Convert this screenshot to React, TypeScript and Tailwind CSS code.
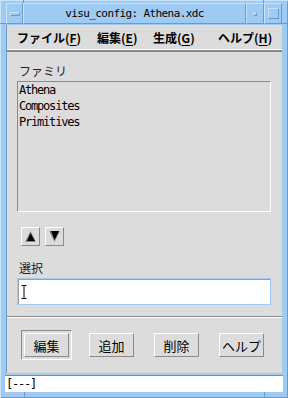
const jp = "font-['Noto_Sans_CJK_JP','Noto_Sans',sans-serif]";
const mono = "font-['DejaVu_Sans_Mono','Liberation_Mono',monospace]";

function Mnemonic({ label, k }: { label: string; k: string }) {
  return (
    <span>
      {label}(<span className="underline underline-offset-2">{k}</span>)
    </span>
  );
}

function PushButton({ children }: { children: React.ReactNode }) {
  return (
    <button className="flex h-[24px] w-[45px] items-center justify-center border border-t-white border-l-white border-r-[#8a8a8a] border-b-[#8a8a8a] bg-[#dcdcdc] text-[13px] leading-none text-black">
      {children}
    </button>
  );
}

function ArrowButton({ dir }: { dir: "up" | "down" }) {
  return (
    <button className="flex h-[19px] w-[19px] items-center justify-center border border-t-white border-l-white border-r-[#8a8a8a] border-b-[#8a8a8a] bg-[#dcdcdc]">
      <svg width="13" height="13" viewBox="0 0 13 13">
        {dir === "up" ? (
          <>
            <polygon points="6.5,1 1,12 12,12" fill="#8a8a8a" />
            <polygon points="6.5,3 3,11 11,11" fill="#000" />
          </>
        ) : (
          <>
            <polygon points="1,1 12,1 6.5,12" fill="#8a8a8a" />
            <polygon points="3,1 11,1 6.5,10" fill="#000" />
          </>
        )}
      </svg>
    </button>
  );
}

export default function App() {
  return (
    <div className="relative flex h-[398px] w-[288px] flex-col bg-[#9fcaf2] px-[6px] pb-[6px] pt-[3px] shadow-[inset_1px_1px_0_#c9e3fb,inset_-1px_-1px_0_#6a9acb]">
      {/* frame resize ticks */}
      <div className="absolute left-[23px] top-0 h-[3px] w-px bg-[#6a9acb]" />
      <div className="absolute right-[24px] top-0 h-[3px] w-px bg-[#6a9acb]" />
      <div className="absolute left-0 top-[23px] h-px w-[6px] bg-[#6a9acb]" />
      <div className="absolute right-0 top-[23px] h-px w-[6px] bg-[#6a9acb]" />
      <div className="absolute bottom-0 left-[24px] h-[6px] w-px bg-[#6a9acb]" />
      <div className="absolute bottom-0 right-[23px] h-[6px] w-px bg-[#6a9acb]" />

      {/* title bar */}
      <div className="flex h-[21px] shrink-0">
        <div className="flex w-[17px] items-center justify-center border border-t-[#c9e3fb] border-l-[#c9e3fb] border-r-[#6a9acb] border-b-[#6a9acb]">
          <div className="h-[4px] w-[10px] border border-t-[#c9e3fb] border-l-[#c9e3fb] border-r-[#6a9acb] border-b-[#6a9acb]" />
        </div>
        <div
          className={`flex flex-1 items-center justify-center border border-t-[#c9e3fb] border-l-[#c9e3fb] border-r-[#6a9acb] border-b-[#6a9acb] text-[11px] leading-none tracking-[-0.6px] text-black ${mono}`}
        >
          visu_config: Athena.xdc
        </div>
        <div className="flex w-[18px] items-center justify-center border border-t-[#c9e3fb] border-l-[#c9e3fb] border-r-[#6a9acb] border-b-[#6a9acb]">
          <div className="h-[4px] w-[4px] border border-t-[#c9e3fb] border-l-[#c9e3fb] border-r-[#6a9acb] border-b-[#6a9acb]" />
        </div>
        <div className="flex w-[18px] items-center justify-center border border-t-[#c9e3fb] border-l-[#c9e3fb] border-r-[#6a9acb] border-b-[#6a9acb]">
          <div className="h-[11px] w-[11px] border border-t-[#c9e3fb] border-l-[#c9e3fb] border-r-[#6a9acb] border-b-[#6a9acb]" />
        </div>
      </div>

      {/* main window */}
      <div className={`mt-px flex flex-1 flex-col bg-[#dcdcdc] text-black ${jp} border-l border-[#6a9acb]`}>
        <div className="flex h-[27px] shrink-0 items-center border-b-2 border-b-[#8a8a8a] pl-[10px] text-[12px] font-bold leading-none shadow-[inset_0_-1px_0_#fff]">
          <div className="w-[80px]">
            <Mnemonic label="ファイル" k="F" />
          </div>
          <div className="w-[56px]">
            <Mnemonic label="編集" k="E" />
          </div>
          <div className="w-[65px]">
            <Mnemonic label="生成" k="G" />
          </div>
          <div>
            <Mnemonic label="ヘルプ" k="H" />
          </div>
        </div>

        <div className="flex flex-col pl-[10px] pr-[9px]">
          <div className="ml-[2px] mt-[12px] h-[14px] text-[12px] leading-[14px] text-[#222]">ファミリ</div>
          <div
            className={`mt-[3px] h-[131px] w-[254px] border border-t-[#8a8a8a] border-l-[#8a8a8a] border-r-white border-b-white pl-px text-[12px] leading-[16px] tracking-[-1.2px] ${mono}`}
          >
            <div>Athena</div>
            <div>Composites</div>
            <div>Primitives</div>
          </div>

          <div className="ml-[4px] mt-[15px] flex gap-[5px]">
            <ArrowButton dir="up" />
            <ArrowButton dir="down" />
          </div>

          <div className="ml-[2px] mt-[15px] h-[14px] text-[12px] leading-[14px] text-[#222]">選択</div>
          <div className="mt-[3px] flex h-[27px] w-[254px] items-center border border-[#9fcaf2] bg-white pl-[3px] shadow-[inset_1px_1px_0_#a0a0a0]">
            <svg width="6" height="14" viewBox="0 0 6 14">
              <path d="M0.5 0.5H5.5M3 0.5V13.5M0.5 13.5H5.5" stroke="#000" strokeWidth="1" fill="none" />
            </svg>
          </div>
        </div>

        <div className="mt-[11px] h-[2px] border-t border-t-[#8a8a8a] border-b border-b-white" />

        <div className="mt-[15px] flex justify-between pl-[17px] pr-[18px]">
          <div className="-m-[3px] border border-t-[#8a8a8a] border-l-[#8a8a8a] border-r-white border-b-white p-[2px]">
            <PushButton>編集</PushButton>
          </div>
          <PushButton>追加</PushButton>
          <PushButton>削除</PushButton>
          <PushButton>ヘルプ</PushButton>
        </div>
      </div>

      {/* status line */}
      <div
        className={`-mx-px mt-[2px] flex h-[17px] shrink-0 items-center border-t border-[#8a8a8a] bg-white pl-[1px] text-[12px] leading-none tracking-[-1.2px] text-black ${mono}`}
      >
        [---]
      </div>
    </div>
  );
}
